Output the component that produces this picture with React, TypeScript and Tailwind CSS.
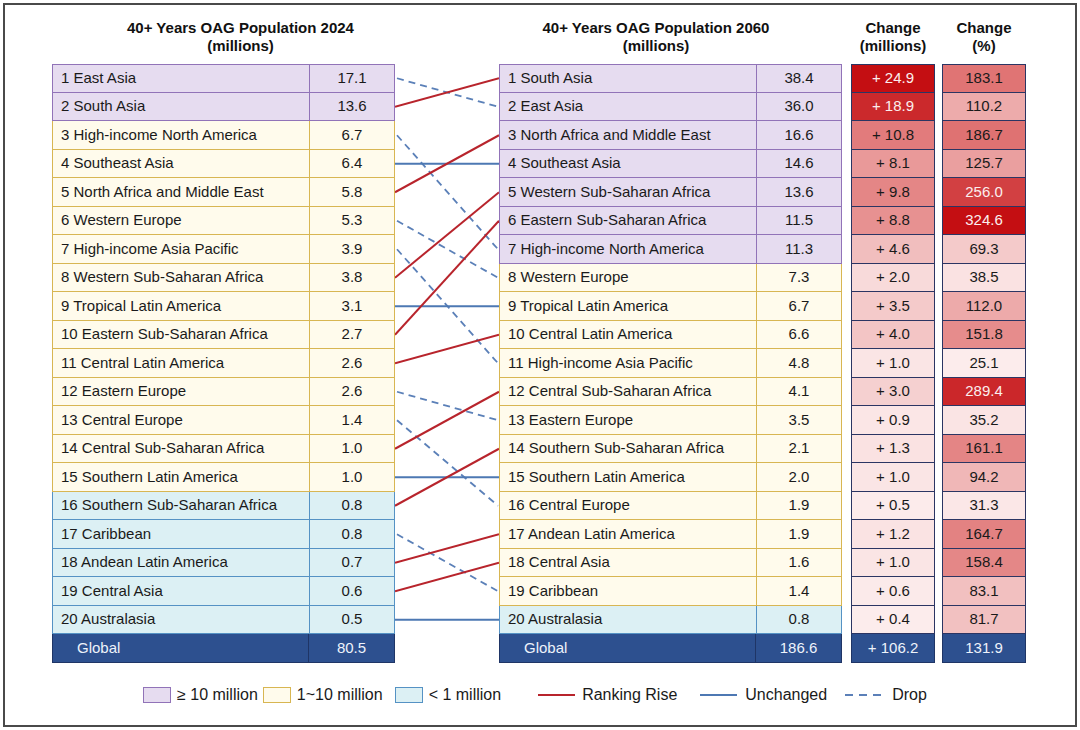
import React from 'react'

type Tier = 'purple' | 'yellow' | 'cyan'

const tierCls: Record<Tier, string> = {
  purple: 'bg-[#e6dcf0] border-[#9173b8]',
  yellow: 'bg-[#fffbec] border-[#d8b652]',
  cyan: 'bg-[#dcf0f4] border-[#5592c4]',
}

const ROW = 28.5

const left: [string, string][] = [
  ['East Asia', '17.1'],
  ['South Asia', '13.6'],
  ['High-income North America', '6.7'],
  ['Southeast Asia', '6.4'],
  ['North Africa and Middle East', '5.8'],
  ['Western Europe', '5.3'],
  ['High-income Asia Pacific', '3.9'],
  ['Western Sub-Saharan Africa', '3.8'],
  ['Tropical Latin America', '3.1'],
  ['Eastern Sub-Saharan Africa', '2.7'],
  ['Central Latin America', '2.6'],
  ['Eastern Europe', '2.6'],
  ['Central Europe', '1.4'],
  ['Central Sub-Saharan Africa', '1.0'],
  ['Southern Latin America', '1.0'],
  ['Southern Sub-Saharan Africa', '0.8'],
  ['Caribbean', '0.8'],
  ['Andean Latin America', '0.7'],
  ['Central Asia', '0.6'],
  ['Australasia', '0.5'],
]

// name, 2060 value, change (millions), change (%)
const right: [string, string, string, string][] = [
  ['South Asia', '38.4', '24.9', '183.1'],
  ['East Asia', '36.0', '18.9', '110.2'],
  ['North Africa and Middle East', '16.6', '10.8', '186.7'],
  ['Southeast Asia', '14.6', '8.1', '125.7'],
  ['Western Sub-Saharan Africa', '13.6', '9.8', '256.0'],
  ['Eastern Sub-Saharan Africa', '11.5', '8.8', '324.6'],
  ['High-income North America', '11.3', '4.6', '69.3'],
  ['Western Europe', '7.3', '2.0', '38.5'],
  ['Tropical Latin America', '6.7', '3.5', '112.0'],
  ['Central Latin America', '6.6', '4.0', '151.8'],
  ['High-income Asia Pacific', '4.8', '1.0', '25.1'],
  ['Central Sub-Saharan Africa', '4.1', '3.0', '289.4'],
  ['Eastern Europe', '3.5', '0.9', '35.2'],
  ['Southern Sub-Saharan Africa', '2.1', '1.3', '161.1'],
  ['Southern Latin America', '2.0', '1.0', '94.2'],
  ['Central Europe', '1.9', '0.5', '31.3'],
  ['Andean Latin America', '1.9', '1.2', '164.7'],
  ['Central Asia', '1.6', '1.0', '158.4'],
  ['Caribbean', '1.4', '0.6', '83.1'],
  ['Australasia', '0.8', '0.4', '81.7'],
]

const tierOf = (v: string): Tier => {
  const n = parseFloat(v)
  if (n >= 10) return 'purple'
  if (n >= 1) return 'yellow'
  return 'cyan'
}

// white -> pink -> deep red
const heat = (t: number) => {
  t = Math.max(0, Math.min(1, t))
  const a = [253, 240, 240]
  const b = [226, 124, 124]
  const c = [196, 14, 18]
  const [p, q, k] = t < 0.5 ? [a, b, t / 0.5] : [b, c, (t - 0.5) / 0.5]
  const rgb = p.map((x, i) => Math.round(x + (q[i] - x) * k))
  return { bg: `rgb(${rgb.join(',')})`, light: t > 0.65 }
}

function PopTable({ rows, total }: { rows: [string, string][]; total: string }) {
  return (
    <div className="flex flex-col w-[343px]">
      {rows.map(([name, v], i) => (
        <div
          key={name}
          className={`flex h-[28.5px] border-x border-b ${i === 0 ? 'border-t' : ''} ${tierCls[tierOf(v)]}`}
        >
          <div className={`w-[257px] pl-[8px] flex items-center border-r ${tierCls[tierOf(v)]}`}>
            {i + 1} {name}
          </div>
          <div className="flex-1 flex items-center justify-center">{v}</div>
        </div>
      ))}
      <div className="flex h-[28.5px] bg-[#2d508f] text-[#eef3fb] border border-t-0 border-[#1f3566]">
        <div className="w-[256px] pl-[24px] flex items-center border-r border-[#1f3566]">Global</div>
        <div className="flex-1 flex items-center justify-center">{total}</div>
      </div>
    </div>
  )
}

function ChangeCol({ values, plus, scale, total }: { values: string[]; plus: boolean; scale: (v: number) => number; total: string }) {
  return (
    <div className="flex flex-col w-[84px]">
      {values.map((v, i) => {
        const h = heat(scale(parseFloat(v)))
        return (
          <div
            key={i}
            style={{ backgroundColor: h.bg }}
            className={`h-[28.5px] flex items-center justify-center border-x border-b border-[#2b3563] ${i === 0 ? 'border-t' : ''} ${h.light ? 'text-[#fbeeee]' : 'text-[#1a1a1a]'}`}
          >
            {plus ? `+ ${v}` : v}
          </div>
        )
      })}
      <div className="h-[28.5px] flex items-center justify-center bg-[#2d508f] text-[#eef3fb] border border-t-0 border-[#1f3566]">
        {total}
      </div>
    </div>
  )
}

function Connectors() {
  const names = right.map((r) => r[0])
  return (
    <svg width="104" height={ROW * 20} className="shrink-0">
      {left.map(([name], i) => {
        const j = names.indexOf(name)
        const y1 = (i + 0.5) * ROW
        const y2 = (j + 0.5) * ROW
        if (j < i) return <line key={name} x1="0" y1={y1} x2="104" y2={y2} stroke="#b8242c" strokeWidth="2" />
        if (j === i) return <line key={name} x1="0" y1={y1} x2="104" y2={y2} stroke="#4d78b3" strokeWidth="1.8" />
        return (
          <line key={name} x1="2" y1={y1} x2="103" y2={y2} stroke="#5b80b8" strokeWidth="1.8" strokeDasharray="7 5" />
        )
      })}
    </svg>
  )
}

function LegendBox({ tier, label, className }: { tier: Tier; label: string; className?: string }) {
  return (
    <div className={`flex items-center ${className ?? ''}`}>
      <div className={`w-[28px] h-[16px] border-[1.5px] ${tierCls[tier]}`} />
      <span className="ml-[6px]">{label}</span>
    </div>
  )
}

export default function App() {
  return (
    <div className="w-[1080px] h-[730px] bg-white p-[3px] font-['Liberation_Sans',Arial,sans-serif] text-[#1a1a1a]">
      <div className="h-full border-2 border-[#4a4a4a] pl-[47px] pt-[14px] flex flex-col">
        {/* headers */}
        <div className="flex font-bold text-[15px] leading-[18px] text-[#111]">
          <div className="w-[343px] pl-[34px] text-center">
            40+ Years OAG Population 2024
            <br />
            (millions)
          </div>
          <div className="w-[104px]" />
          <div className="w-[344px] pr-[30px] text-center">
            40+ Years OAG Population 2060
            <br />
            (millions)
          </div>
          <div className="w-[8px]" />
          <div className="w-[84px] text-center">
            Change
            <br />
            (millions)
          </div>
          <div className="w-[7px]" />
          <div className="w-[84px] text-center">
            Change
            <br />
            (%)
          </div>
        </div>

        {/* tables */}
        <div className="flex items-start mt-[9px] text-[15px]">
          <PopTable rows={left} total="80.5" />
          <Connectors />
          <div className="w-[344px]">
            <PopTable rows={right.map((r) => [r[0], r[1]] as [string, string])} total="186.6" />
          </div>
          <div className="w-[8px]" />
          <ChangeCol values={right.map((r) => r[2])} plus scale={(v) => v / 21.5} total="+ 106.2" />
          <div className="w-[7px]" />
          <ChangeCol values={right.map((r) => r[3])} plus={false} scale={(v) => (v - 20) / 304.6} total="131.9" />
        </div>

        {/* legend */}
        <div className="flex items-center mt-[22px] ml-[91px] text-[16px] leading-[20px]">
          <LegendBox tier="purple" label="≥ 10 million" />
          <LegendBox tier="yellow" label="1~10 million" className="ml-[5px]" />
          <LegendBox tier="cyan" label="< 1 million" className="ml-[12px]" />
          <div className="ml-[37px] w-[37px] h-[2px] bg-[#b8242c]" />
          <span className="ml-[7px]">Ranking Rise</span>
          <div className="ml-[23px] w-[37px] h-[2px] bg-[#4d78b3]" />
          <span className="ml-[8px]">Unchanged</span>
          <svg width="36" height="4" className="ml-[18px]">
            <line x1="0" y1="2" x2="36" y2="2" stroke="#5b80b8" strokeWidth="2" strokeDasharray="8 6" />
          </svg>
          <span className="ml-[11px]">Drop</span>
        </div>
      </div>
    </div>
  )
}
